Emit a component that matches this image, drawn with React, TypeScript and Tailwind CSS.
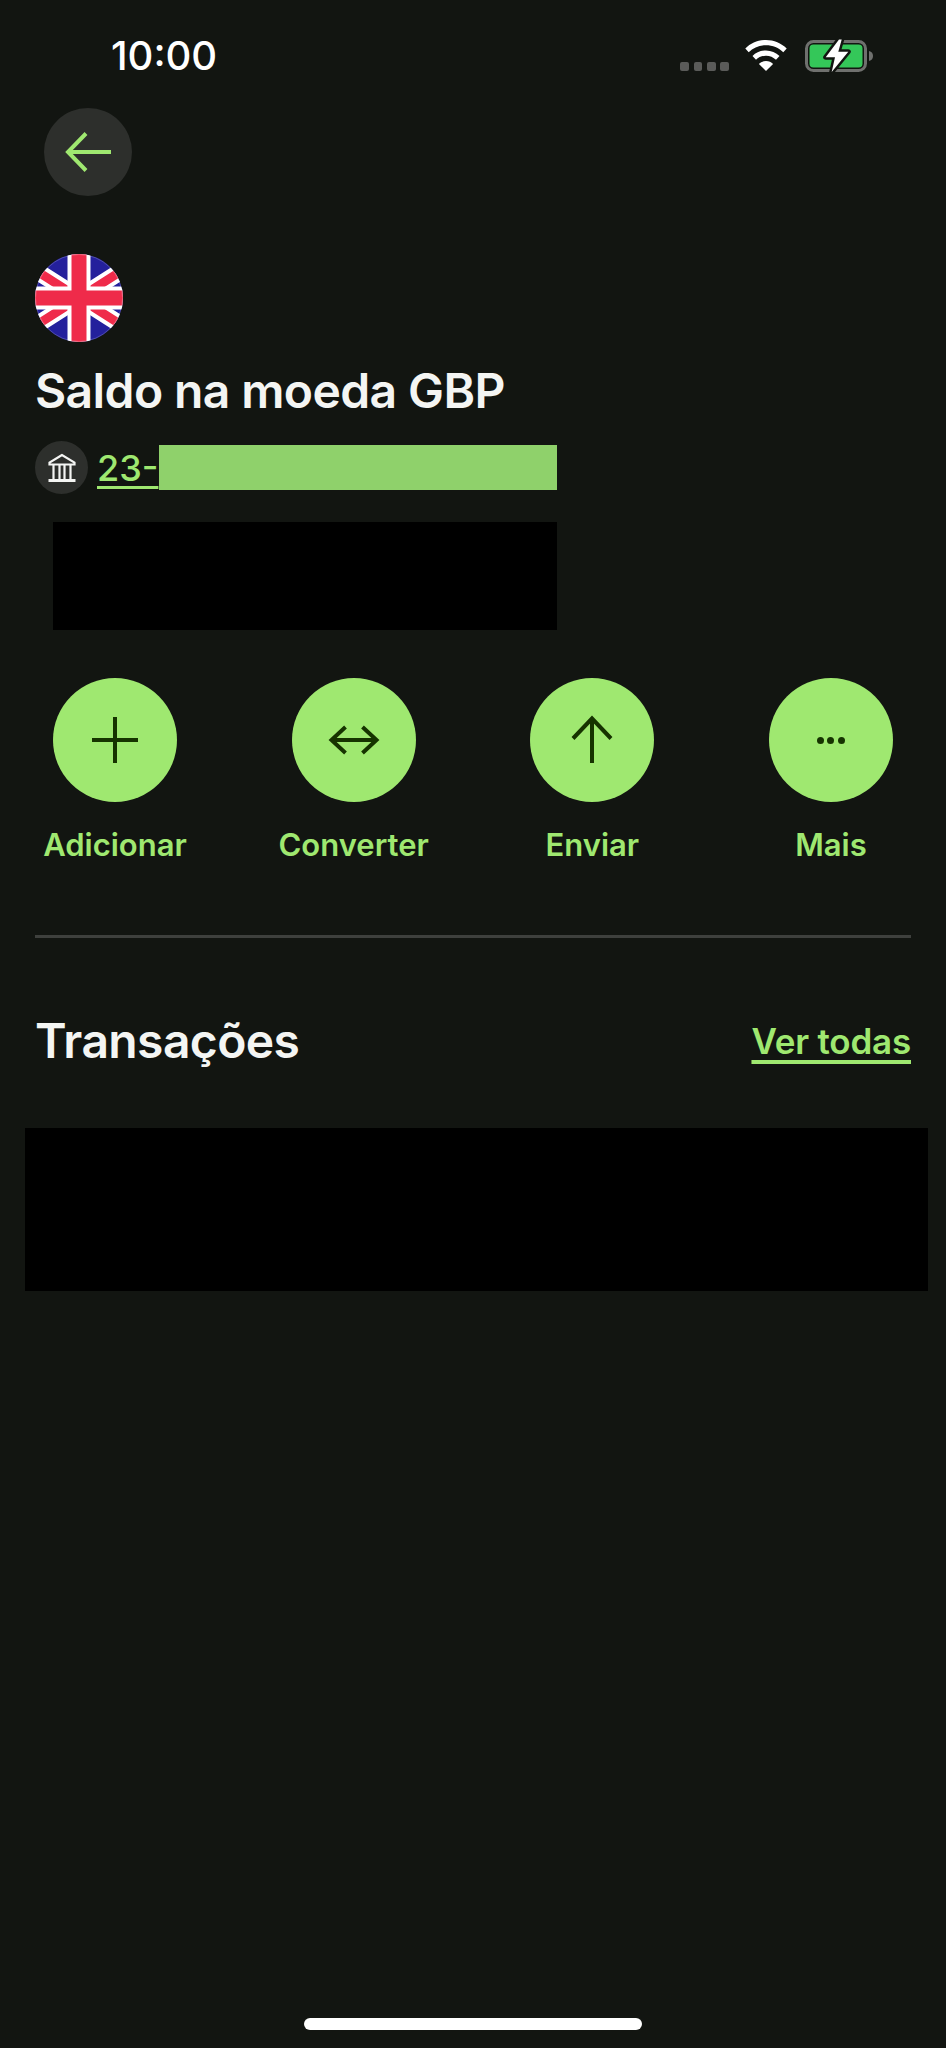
import React from 'react';

const actions = [
  {
    label: 'Adicionar',
    icon: <path d="M31 8v46M8 31h46" />,
  },
  {
    label: 'Converter',
    icon: <path d="M9 31h44M22.500 18 8.500 31l14 13M39.500 18l14 13-14 13" />,
  },
  {
    label: 'Enviar',
    icon: <path d="M31 54V9.500M12 29.500 31 9.500l19 20" />,
  },
];

function FlagUK() {
  return (
    <svg viewBox="0 0 88 88" className="w-[88px] h-[88px]">
      <defs>
        <clipPath id="flag-circle">
          <circle cx="44" cy="44" r="44" />
        </clipPath>
      </defs>
      <g clipPath="url(#flag-circle)">
        <rect width="88" height="88" fill="#24209c" />
        <path d="M0 16 88 72M88 16 0 72" stroke="#fff" strokeWidth="17" />
        <path d="M0 16 88 72M88 16 0 72" stroke="#ef2b4a" strokeWidth="9" />
        <path d="M44 0v88M0 44h88" stroke="#fff" strokeWidth="23" />
        <path d="M44 0v88M0 44h88" stroke="#ef2b4a" strokeWidth="15" />
      </g>
      <circle cx="44" cy="44" r="43.500" fill="none" stroke="#fff" strokeOpacity="0.2" />
    </svg>
  );
}

function StatusIcons() {
  return (
    <div className="flex items-start">
      <div className="flex gap-[4.6px] mt-[22px] mr-[16px]">
        {[0, 1, 2, 3].map(i => (
          <div key={i} className="w-[8.7px] h-[9px] rounded-[2px] bg-[#5a5b59]" />
        ))}
      </div>
      <svg viewBox="0 0 42 31" className="w-[42px] h-[31px] mr-[18px]" fill="#fff">
        <path d="M21 0C13 0 5.800 3.200.300 8.400l3.400 3.800C8.200 7.800 14.300 5.200 21 5.200s12.800 2.600 17.300 7l3.400-3.800C36.200 3.200 29 0 21 0Z" />
        <path d="M21 10.500c-5.200 0-10 2.100-13.500 5.500l3.500 3.800c2.600-2.500 6.100-4.100 10-4.100s7.400 1.600 10 4.100l3.500-3.800C31 12.600 26.200 10.500 21 10.500Z" />
        <path d="M21 21c-2.800 0-5.300 1.100-7.100 2.900L21 31l7.100-7.100C26.300 22.100 23.800 21 21 21Z" />
      </svg>
      <svg viewBox="0 0 70 34" className="w-[70px] h-[34px] -mt-[1px]">
        <rect x="1.500" y="2.500" width="59" height="29" rx="7" fill="none" stroke="#6f706e" strokeWidth="3" />
        <rect x="4.500" y="5.500" width="53" height="23" rx="4" fill="#34c759" />
        <path d="M64 12c2.800.7 4 2.500 4 5s-1.200 4.300-4 5Z" fill="#6f706e" />
        <path d="M34 .5 20.700 18.300H30L26.700 33l16.600-20.300H33.300L36.700.5Z" fill="#fff" stroke="#121511" strokeWidth="5" strokeLinejoin="round" paintOrder="stroke" />
      </svg>
    </div>
  );
}

export default function App() {
  return (
    <div className="min-h-screen flex flex-col bg-[#121511] font-['Inter',sans-serif] text-[#f4f5f3]">
      {/* Status bar */}
      <div className="flex justify-between items-start h-[108px] pl-[111px] pr-[71px] pt-[40px]">
        <span className="text-[40px] leading-[32px] font-medium text-white">10:00</span>
        <StatusIcons />
      </div>

      <div className="px-[35px]">
        <button className="w-[88px] h-[88px] ml-[9px] rounded-full bg-[#2d2f2c] flex items-center justify-center">
          <svg viewBox="0 0 46 40" className="w-[46px] h-[40px]" fill="none" stroke="#9fe870" strokeWidth="4">
            <path d="M46 20H3M21 1.500 3 20l18 18.500" />
          </svg>
        </button>

        <div className="mt-[58px]">
          <FlagUK />
        </div>

        <h1 className="mt-[21px] text-[48px] leading-[56px] font-semibold tracking-[-0.6px]">Saldo na moeda GBP</h1>

        <div className="mt-[22px] flex items-center">
          <div className="w-[53px] h-[53px] rounded-full bg-[#2d2f2c] flex items-center justify-center">
            <svg viewBox="0 0 30 30" className="w-[30px] h-[30px]" fill="none" stroke="#f4f5f3" strokeWidth="2.200">
              <path d="M15 2 2.500 9.500v2h25v-2ZM6.500 12v14M12.500 12v14M17.500 12v14M23.500 12v14" />
              <path d="M1.500 27.500h27" strokeWidth="3" />
            </svg>
          </div>
          <div className="ml-[9px] w-[62px] text-[36px] leading-[44px] font-medium text-[#9fe870] underline underline-offset-[5px] decoration-[3px] whitespace-nowrap">
            23-
          </div>
          <div className="w-[398px] h-[45px] bg-[#8fd16b]" />
        </div>

        {/* Saldo oculto */}
        <div className="mt-[28px] ml-[18px] w-[504px] h-[108px] bg-black" />

        <div className="mt-[48px] flex justify-between">
          {actions.map(a => (
            <div key={a.label} className="w-[160px] flex flex-col items-center">
              <div className="w-[124px] h-[124px] rounded-full bg-[#9fe870] flex items-center justify-center">
                <svg viewBox="0 0 62 62" className="w-[62px] h-[62px]" fill="none" stroke="#163300" strokeWidth="4">
                  {a.icon}
                </svg>
              </div>
              <span className="mt-[23px] text-[31px] leading-[40px] font-semibold text-[#9fe870] whitespace-nowrap">{a.label}</span>
            </div>
          ))}
          <div className="w-[160px] flex flex-col items-center">
            <div className="w-[124px] h-[124px] rounded-full bg-[#9fe870] flex items-center justify-center gap-[3.500px]">
              <div className="w-[7px] h-[7px] rounded-full bg-[#163300]" />
              <div className="w-[7px] h-[7px] rounded-full bg-[#163300]" />
              <div className="w-[7px] h-[7px] rounded-full bg-[#163300]" />
            </div>
            <span className="mt-[23px] text-[31px] leading-[40px] font-semibold text-[#9fe870]">Mais</span>
          </div>
        </div>

        <div className="mt-[70px] h-[3px] bg-[#3e403d]" />

        <div className="mt-[75px] flex justify-between items-center">
          <h2 className="text-[48px] leading-[56px] font-semibold tracking-[-0.6px]">Transações</h2>
          <a className="text-[35px] leading-[44px] font-semibold tracking-[-0.2px] text-[#9fe870] underline underline-offset-[6px] decoration-[4px]">Ver todas</a>
        </div>
      </div>

      {/* Lista oculta */}
      <div className="mt-[59px] ml-[25px] mr-[18px] h-[163px] bg-black" />

      <div className="mt-auto pb-[18px] flex justify-center">
        <div className="w-[338px] h-[12px] rounded-full bg-white" />
      </div>
    </div>
  );
}
